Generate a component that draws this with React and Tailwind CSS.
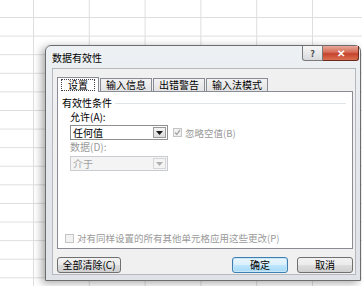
import React from 'react';

const font = { fontFamily: '"Noto Sans CJK SC", "Noto Sans", sans-serif' };

function Combo({ value, disabled }) {
  return (
    <div
      className={`flex h-[15px] w-[98px] items-center border ${
        disabled ? 'border-[#c9ccd0] bg-[#f4f4f4] text-[#a0a0a0]' : 'border-[#8e8f8f] bg-white text-black'
      }`}
    >
      <span className="flex-1 pl-[2px] text-[10px] leading-[12px]">{value}</span>
      <span
        className={`mr-[1px] flex h-[11px] w-[13px] items-center justify-center border ${
          disabled ? 'border-[#d6d6d6] bg-[#f4f4f4]' : 'border-[#9a9a9a] bg-[linear-gradient(#f4f4f4,#dcdcdc)]'
        }`}
      >
        <svg width="7" height="4" viewBox="0 0 7 4">
          <path d="M0 0h7L3.5 4z" fill={disabled ? '#b0b0b0' : '#1a1a1a'} />
        </svg>
      </span>
    </div>
  );
}

function Check({ label, checked }) {
  return (
    <div className="flex items-center gap-[3px] text-[#9a9a9a]">
      <span className="flex h-[9px] w-[9px] items-center justify-center border border-[#c4c4c4] bg-[#f2f2f2]">
        {checked && (
          <svg width="7" height="7" viewBox="0 0 7 7">
            <path d="M1 3.5l1.8 2L6 1" fill="none" stroke="#a8a8a8" strokeWidth="1.3" />
          </svg>
        )}
      </span>
      <span className="text-[9.5px] leading-[12px]">{label}</span>
    </div>
  );
}

function Button({ children, primary, width }) {
  return (
    <div
      className={`flex h-[16px] items-center justify-center rounded-[3px] border text-[10px] leading-[12px] text-black ${width} ${
        primary
          ? 'border-[#3c7fb1] bg-[linear-gradient(#eaf6fd_0%,#d9f0fc_50%,#bee6fd_51%,#a7d9f5_100%)] shadow-[inset_0_0_0_1px_#c8e6f8]'
          : 'border-[#707070] bg-[linear-gradient(#f2f2f2_0%,#ebebeb_50%,#dddddd_51%,#cfcfcf_100%)]'
      }`}
    >
      {children}
    </div>
  );
}

export default function App() {
  const tabs = ['设置', '输入信息', '出错警告', '输入法模式'];
  return (
    <div
      className="relative h-[286px] w-[362px] overflow-hidden bg-white bg-[linear-gradient(to_right,#dedede_1px,transparent_1px),linear-gradient(to_bottom,#dedede_1px,transparent_1px)] bg-[size:55.8px_18.6px] bg-[position:33px_17px]"
      style={font}
    >
      <div className="absolute left-[45px] top-[45px] flex h-[236px] w-[316px] flex-col rounded-t-[6px] border border-[#6d6d6d] bg-[linear-gradient(to_bottom,#eef1f4,#e4e8ec_40%,#dfe3e7)] shadow-[-3px_2px_8px_rgba(0,0,0,0.35)]">
        <div className="flex h-[22px] items-start">
          <span className="pl-[6px] pt-[6px] text-[10px] leading-[12px] text-black">数据有效性</span>
          <div className="ml-auto mr-[1px] flex">
            <span className="flex h-[15px] w-[21px] items-center justify-center rounded-bl-[3px] border border-t-0 border-[#7a7a7a] bg-[linear-gradient(#f6f6f6,#d8dadd)] text-[9px] font-bold leading-none text-[#4a4a4a]">
              ?
            </span>
            <span className="flex h-[15px] w-[36px] items-center justify-center rounded-br-[3px] border border-l-0 border-t-0 border-[#6a2a20] bg-[linear-gradient(#e9a99b_0%,#d46b55_45%,#c7432f_55%,#d9714f_100%)] text-[10px] font-bold leading-none text-white">
              ✕
            </span>
          </div>
        </div>
        <div className="mb-[5px] ml-[6px] mr-[4px] flex flex-1 flex-col border border-[#b5b9be] bg-[#f0f0f0] pl-[4px] pr-[2px] pt-[8px]">
          <div className="flex items-end">
            {tabs.map((t, i) =>
              i === 0 ? (
                <div
                  key={t}
                  className="relative z-10 -mb-px flex h-[15px] items-center border border-b-0 border-[#898c95] bg-white px-[3px]"
                >
                  <span className="border border-dotted border-[#404040] px-[6px] text-[10px] leading-[10px] text-black">{t}</span>
                </div>
              ) : (
                <div
                  key={t}
                  className="ml-[1px] flex h-[13px] items-center border border-b-0 border-[#898c95] bg-[linear-gradient(#f2f2f2,#e3e3e3)] px-[5px] text-[10px] leading-[12px] text-black"
                >
                  {t}
                </div>
              )
            )}
          </div>
          <div className="flex h-[158px] flex-col border border-[#898c95] bg-white px-[4px] pt-[5px]">
            <div className="flex items-center gap-[3px]">
              <span className="text-[10px] leading-[12px] text-black">有效性条件</span>
              <span className="mr-[2px] h-px flex-1 bg-[#dfe4e8]" />
            </div>
            <div className="pl-[8px]">
              <div className="mt-[2px] text-[10px] leading-[12px] text-black">允许(A):</div>
              <div className="mt-[2px] flex items-center gap-[5px]">
                <Combo value="任何值" />
                <Check label="忽略空值(B)" checked />
              </div>
              <div className="mt-[1px] text-[10px] leading-[12px] text-[#9a9a9a]">数据(D):</div>
              <div className="mt-[3px]">
                <Combo value="介于" disabled />
              </div>
            </div>
            <div className="mt-auto mb-[4px] pl-[3px]">
              <Check label="对有同样设置的所有其他单元格应用这些更改(P)" />
            </div>
          </div>
          <div className="mt-[8px] flex items-center">
            <Button width="w-[64px]">全部清除(C)</Button>
            <div className="ml-auto flex gap-[9px]">
              <Button primary width="w-[56px]">确定</Button>
              <Button width="w-[56px]">取消</Button>
            </div>
          </div>
        </div>
      </div>
    </div>
  );
}
